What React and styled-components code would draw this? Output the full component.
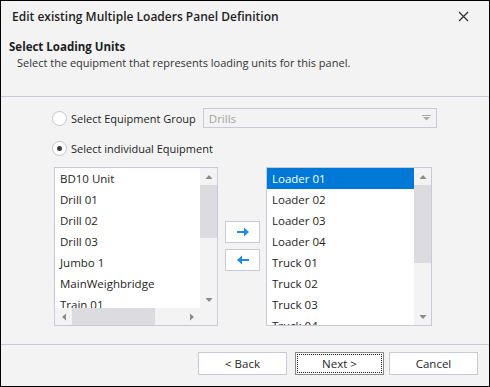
import React from 'react';
import styled, { createGlobalStyle } from 'styled-components';

const GlobalStyle = createGlobalStyle`
  html, body {
    margin: 0;
    padding: 0;
    background: #f3f3f3;
  }
  * {
    box-sizing: border-box;
  }
`;

const LINE = '#c9c9dc';
const TEXT = '#1e1e1e';

const Dialog = styled.div`
  width: 490px;
  height: 387px;
  border: 1px solid #000;
  background: #f3f3f3;
  display: flex;
  flex-direction: column;
  font-family: "Open Sans", "Noto Sans", sans-serif;
  color: ${TEXT};
`;

const TitleBar = styled.div`
  height: 31px;
  display: flex;
  align-items: center;
  justify-content: space-between;
  padding: 0 20px 0 11px;
  font-size: 12px;
  font-weight: 600;
`;

const CloseButton = styled.span`
  display: flex;
  width: 11px;
  height: 11px;
`;

const Header = styled.div`
  height: 65px;
  padding: 7px 0 0 8px;
  border-bottom: 1px solid ${LINE};
`;

const HeaderTitle = styled.div`
  font-size: 11.5px;
  font-weight: 700;
  line-height: 16px;
`;

const HeaderText = styled.div`
  font-size: 11px;
  line-height: 15px;
  padding-left: 8px;
  color: #333;
`;

const Content = styled.div`
  flex: 1;
  padding: 11px 0 0 51px;
  display: flex;
  flex-direction: column;
  gap: 10px;
`;

const OptionRow = styled.label`
  height: 20px;
  display: flex;
  align-items: center;
  font-size: 11px;
`;

const Radio = styled.span`
  width: 15px;
  height: 15px;
  border-radius: 50%;
  border: 1px solid #c4c4ce;
  background: #fff;
  display: flex;
  align-items: center;
  justify-content: center;
  margin-right: 4px;

  &::after {
    content: '';
    width: 5px;
    height: 5px;
    border-radius: 50%;
    background: ${p => (p.$checked ? '#3c3c3c' : 'transparent')};
  }
`;

const Select = styled.div`
  margin-left: 7px;
  width: 234px;
  height: 20px;
  border: 1px solid ${LINE};
  display: flex;
  align-items: center;
  justify-content: space-between;
  padding: 0 5px 0 5px;
  color: #a3a3a3;
  font-size: 11.5px;
`;

const Lists = styled.div`
  margin: -1px 0 0 2px;
  display: flex;
  align-items: flex-start;
`;

const ListBox = styled.div`
  width: ${p => p.$width}px;
  height: 159px;
  border: 1px solid ${LINE};
  background: #fff;
  display: grid;
  grid-template-columns: 1fr 17px;
  grid-template-rows: ${p => (p.$hscroll ? '1fr 17px' : '1fr')};
  overflow: hidden;
`;

const Items = styled.div`
  overflow: hidden;
`;

const Item = styled.div`
  height: 21px;
  line-height: 21px;
  padding-left: 5px;
  font-size: 11.5px;
  white-space: nowrap;
  background: ${p => (p.$selected ? '#0078d7' : 'transparent')};
  color: ${p => (p.$selected ? '#fff' : TEXT)};
`;

const VScroll = styled.div`
  background: #f3f3f3;
  display: flex;
  flex-direction: column;
`;

const HScroll = styled.div`
  background: #f3f3f3;
  display: flex;
`;

const Corner = styled.div`
  background: #f3f3f3;
`;

const ScrollArrow = styled.div`
  width: 17px;
  height: 17px;
  flex: none;
  display: flex;
  align-items: center;
  justify-content: center;
`;

const Track = styled.div`
  flex: 1;
  display: flex;
  flex-direction: ${p => (p.$horizontal ? 'row' : 'column')};
  justify-content: space-between;
`;

const Thumb = styled.div`
  background: #dcdce0;
  ${p => (p.$horizontal ? `width: ${p.$size}px;` : `height: ${p.$size}px;`)}
`;

const MoveButtons = styled.div`
  margin: 54px 6px 0 7px;
  display: flex;
  flex-direction: column;
  gap: 6px;
`;

const MoveButton = styled.div`
  width: 35px;
  height: 22px;
  border: 1px solid ${LINE};
  background: #fff;
  display: flex;
  align-items: center;
  justify-content: center;
`;

const Footer = styled.div`
  height: 42px;
  border-top: 1px solid ${LINE};
  display: flex;
  justify-content: flex-end;
  align-items: flex-start;
  padding: 7px 11px 0 0;
  gap: 7px;
`;

const Button = styled.div`
  position: relative;
  width: 89px;
  height: 23px;
  background: #fff;
  border: 1px solid ${p => (p.$focused ? '#8a8a8a' : LINE)};
  display: flex;
  align-items: center;
  justify-content: center;
  font-size: 11.5px;
  margin-left: ${p => p.$gap || 0}px;

  &::after {
    content: '';
    display: ${p => (p.$focused ? 'block' : 'none')};
    position: absolute;
    inset: 1px;
    border: 1px dotted #222;
  }
`;

const Tri = ({ dir, color = '#8a8a8a' }) => {
  const pts = {
    up: '0.5,5 4,1 7.5,5',
    down: '0.5,1 4,5 7.5,1',
    left: '5,0.5 1,4 5,7.5',
    right: '1,0.5 5,4 1,7.5',
  }[dir];
  const horizontal = dir === 'left' || dir === 'right';
  return (
    <svg width={horizontal ? 6 : 8} height={horizontal ? 8 : 6} viewBox={horizontal ? '0 0 6 8' : '0 0 8 6'}>
      <polygon points={pts} fill={color} />
    </svg>
  );
};

const Arrow = ({ left }) => (
  <svg width="14" height="10" viewBox="0 0 14 10">
    <g transform={left ? 'scale(-1,1) translate(-14,0)' : undefined}>
      <rect x="1" y="4" width="9" height="2" fill="#1e8ae6" />
      <polygon points="8,0.5 13,5 8,9.5" fill="#1e8ae6" />
    </g>
  </svg>
);

const VerticalBar = ({ thumb }) => (
  <VScroll>
    <ScrollArrow><Tri dir="up" /></ScrollArrow>
    <Track>
      <Thumb $size={thumb} />
    </Track>
    <ScrollArrow><Tri dir="down" /></ScrollArrow>
  </VScroll>
);

const available = ['BD10 Unit', 'Drill 01', 'Drill 02', 'Drill 03', 'Jumbo 1', 'MainWeighbridge', 'Train 01', 'Train 02'];
const selected = ['Loader 01', 'Loader 02', 'Loader 03', 'Loader 04', 'Truck 01', 'Truck 02', 'Truck 03', 'Truck 04'];

export default function App() {
  return (
    <>
      <GlobalStyle />
      <Dialog>
        <TitleBar>
          <span>Edit existing Multiple Loaders Panel Definition</span>
          <CloseButton>
            <svg width="11" height="11" viewBox="0 0 11 11">
              <path d="M1 1 L10 10 M10 1 L1 10" stroke="#333" strokeWidth="1.3" />
            </svg>
          </CloseButton>
        </TitleBar>

        <Header>
          <HeaderTitle>Select Loading Units</HeaderTitle>
          <HeaderText>Select the equipment that represents loading units for this panel.</HeaderText>
        </Header>

        <Content>
          <OptionRow>
            <Radio />
            Select Equipment Group
            <Select>
              <span>Drills</span>
              <svg width="9" height="6" viewBox="0 0 9 6">
                <rect x="0" y="0" width="9" height="1" fill="#a8a8a8" />
                <polygon points="1,2 8,2 4.5,5.5" fill="#a8a8a8" />
              </svg>
            </Select>
          </OptionRow>
          <OptionRow>
            <Radio $checked />
            Select individual Equipment
          </OptionRow>

          <Lists>
            <ListBox $width={164} $hscroll>
              <Items>
                {available.map(name => <Item key={name}>{name}</Item>)}
              </Items>
              <VerticalBar thumb={53} />
              <HScroll>
                <ScrollArrow><Tri dir="left" /></ScrollArrow>
                <Track $horizontal>
                  <Thumb $horizontal $size={83} />
                </Track>
                <ScrollArrow><Tri dir="right" /></ScrollArrow>
              </HScroll>
              <Corner />
            </ListBox>

            <MoveButtons>
              <MoveButton><Arrow /></MoveButton>
              <MoveButton><Arrow left /></MoveButton>
            </MoveButtons>

            <ListBox $width={166}>
              <Items>
                {selected.map((name, i) => <Item key={name} $selected={i === 0}>{name}</Item>)}
              </Items>
              <VerticalBar thumb={78} />
            </ListBox>
          </Lists>
        </Content>

        <Footer>
          <Button>&lt; Back</Button>
          <Button $focused $gap={1}>Next &gt;</Button>
          <Button $gap={-2}>Cancel</Button>
        </Footer>
      </Dialog>
    </>
  );
}
